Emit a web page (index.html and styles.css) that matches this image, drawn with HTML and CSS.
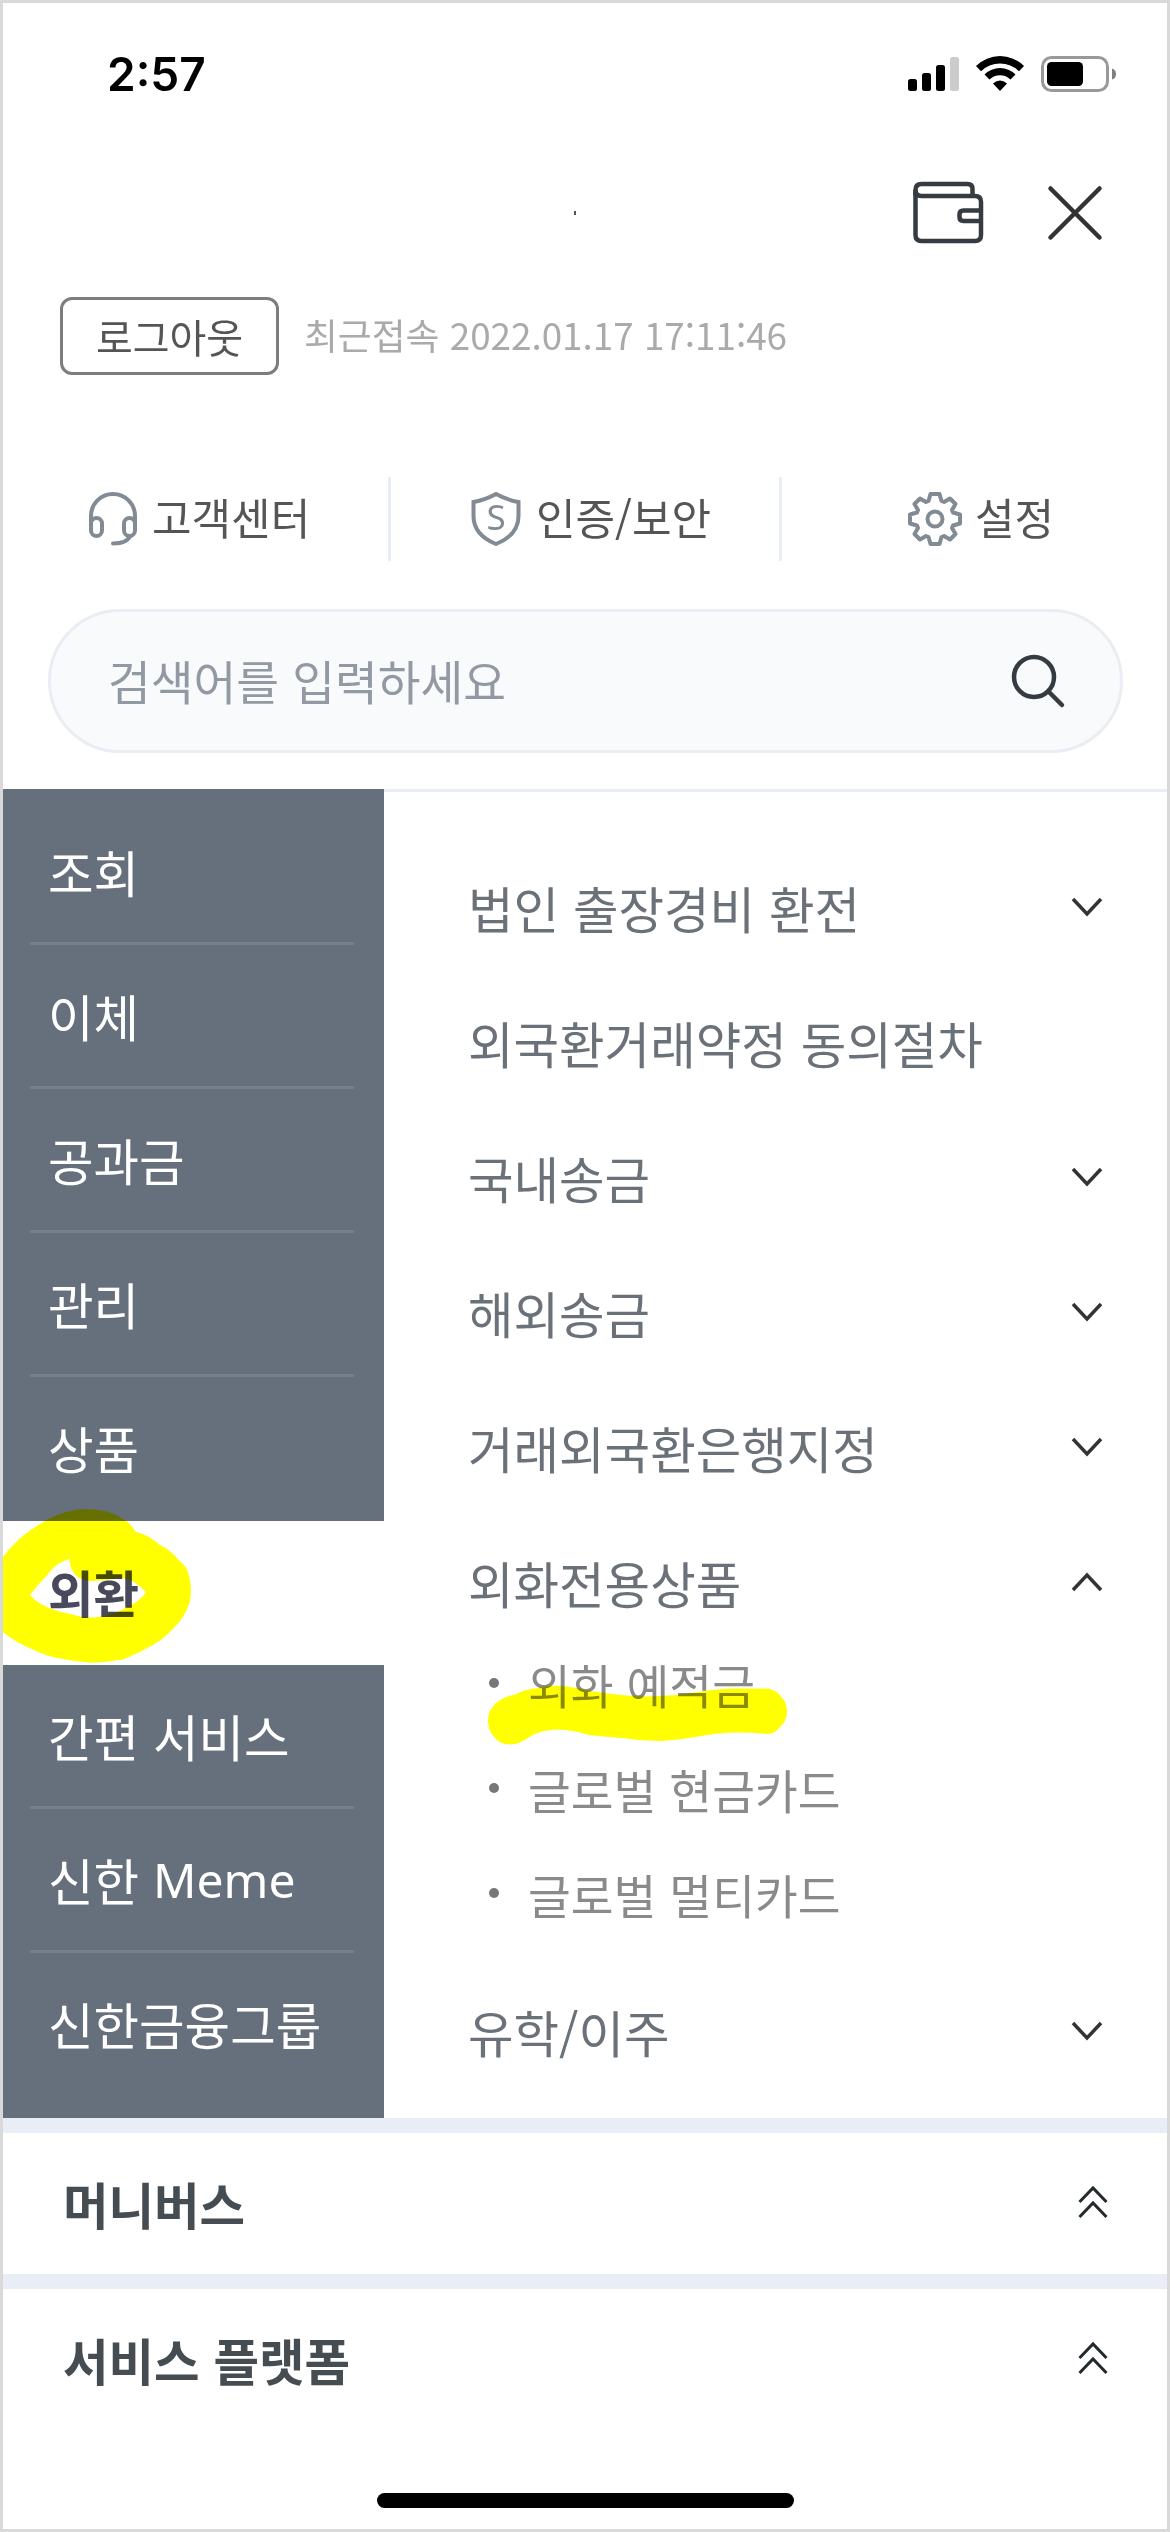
FILE: index.html
```html
<!DOCTYPE html>
<html lang="ko">
<head>
    <meta charset="UTF-8">
    <meta name="viewport" content="width=device-width, initial-scale=1.0">
    <title>전체메뉴</title>
    <link rel="stylesheet" href="styles.css">
</head>
<body>
    <div id="wrapper">
        <!-- 상태바 -->
        <div class="status">
            <span class="time">2:57</span>
            <svg class="status_icons" width="210" height="40" viewBox="0 0 210 40">
                <rect x="1" y="25" width="9" height="12" rx="2.5"/>
                <rect x="15" y="19" width="9" height="18" rx="2.5"/>
                <rect x="29" y="11" width="9" height="26" rx="2.5"/>
                <rect x="43" y="3" width="9" height="34" rx="2.5" fill="#cccccc"/>
                <path d="M69 12 A34 34 0 0 1 117 12 L112 17.300 A27 27 0 0 0 74 17.300 Z"/>
                <path d="M77.500 20.500 A22 22 0 0 1 108.500 20.500 L103.500 25.500 A15 15 0 0 0 82.500 25.500 Z"/>
                <path d="M86 29.500 Q93 23.500 100 29.500 L93 37 Z"/>
                <rect x="135.500" y="3.500" width="65" height="33" rx="9" fill="none" stroke="#999999" stroke-width="3"/>
                <rect x="140" y="8" width="36" height="24" rx="4.500"/>
                <path d="M205 14.500 Q209 15.500 209 20 Q209 24.500 205 25.500 Z" fill="#808080"/>
            </svg>
        </div>

        <!-- 상단 버튼 -->
        <div class="top">
            <span class="dot"></span>
            <svg width="72" height="64" viewBox="0 0 72 64" fill="none" stroke="#353b40" stroke-width="4.500">
                <path d="M2.500 15 V9 Q2.500 3 8.500 3 H54.500 Q59.500 3 59.500 8 V15"/>
                <path d="M2.500 9 V54 Q2.500 60 8.500 60 H62 Q68 60 68 54 V21 Q68 15 62 15 H8.500 Q2.500 15 2.500 9"/>
                <path d="M68 29.500 H50.500 Q46.500 29.500 46.500 33.500 V36 Q46.500 40 50.500 40 H68"/>
            </svg>
            <svg class="close" width="56" height="56" viewBox="0 0 56 56" fill="none" stroke="#333333" stroke-width="4.500" stroke-linecap="round">
                <path d="M3.500 3.500 L52.500 52.500 M52.500 3.500 L3.500 52.500"/>
            </svg>
        </div>

        <div class="login">
            <button class="bt_logout">로그아웃</button>
            <span class="last">최근접속 2022.01.17 17:11:46</span>
        </div>

        <div class="quick">
            <a class="q1">
                <svg width="50" height="56" viewBox="0 0 50 56" fill="none" stroke="#828a94" stroke-width="4" stroke-linecap="round">
                    <path d="M3 38 V25 A22 22 0 0 1 47 25 V38"/>
                    <rect x="3" y="27" width="11" height="18" rx="5.500"/>
                    <rect x="36" y="27" width="11" height="18" rx="5.500"/>
                    <path d="M42 45 Q39 52.500 25 52.500"/>
                </svg>
                <span>고객센터</span>
            </a>
            <a class="q2">
                <svg width="50" height="56" viewBox="0 0 50 56" fill="none" stroke="#828a94" stroke-width="4">
                    <path d="M25 3 Q36 9 47.500 11 V25 Q47.500 44 25 53 Q2.500 44 2.500 25 V11 Q14 9 25 3 Z"/>
                    <text class="shield_s" x="25" y="39" text-anchor="middle" stroke="none" fill="#828a94">S</text>
                </svg>
                <span>인증/보안</span>
            </a>
            <a class="q3">
                <svg width="56" height="56" viewBox="-28 -28 56 56" fill="none" stroke="#828a94" stroke-width="4" stroke-linejoin="round">
                    <path d="M-4.500 -25 H4.500 L6.500 -18 L9 -17 L15 -20.500 L20.500 -15 L17 -9 L18 -6.500 L25 -4.500 V4.500 L18 6.500 L17 9 L20.500 15 L15 20.500 L9 17 L6.500 18 L4.500 25 H-4.500 L-6.500 18 L-9 17 L-15 20.500 L-20.500 15 L-17 9 L-18 6.500 L-25 4.500 V-4.500 L-18 -6.500 L-17 -9 L-20.500 -15 L-15 -20.500 L-9 -17 L-6.500 -18 Z"/>
                    <circle r="7.500"/>
                </svg>
                <span>설정</span>
            </a>
        </div>

        <div class="search">
            <span>검색어를 입력하세요</span>
            <svg width="56" height="56" viewBox="0 0 56 56" fill="none" stroke="#353b40" stroke-width="4.500" stroke-linecap="round">
                <circle cx="24" cy="24" r="20"/>
                <path d="M39 39 L52 52"/>
            </svg>
        </div>

        <div id="content">
            <!-- 좌측 대메뉴 -->
            <ul class="side">
                <li>조회</li>
                <li>이체</li>
                <li>공과금</li>
                <li>관리</li>
                <li class="noline">상품</li>
                <li class="on">외환</li>
                <li>간편 서비스</li>
                <li>신한&nbsp;<span class="eng">Meme</span></li>
                <li class="noline">신한금융그룹</li>
            </ul>
            <!-- 우측 소메뉴 -->
            <div class="menu">
                <div class="row">법인 출장경비 환전<svg class="arrow" viewBox="0 0 32 20"><path d="M2 2 L16 17 L30 2"/></svg></div>
                <div class="row">외국환거래약정 동의절차</div>
                <div class="row">국내송금<svg class="arrow" viewBox="0 0 32 20"><path d="M2 2 L16 17 L30 2"/></svg></div>
                <div class="row">해외송금<svg class="arrow" viewBox="0 0 32 20"><path d="M2 2 L16 17 L30 2"/></svg></div>
                <div class="row">거래외국환은행지정<svg class="arrow" viewBox="0 0 32 20"><path d="M2 2 L16 17 L30 2"/></svg></div>
                <div class="row">외화전용상품<svg class="arrow" viewBox="0 0 32 20"><path d="M2 18 L16 3 L30 18"/></svg></div>
                <ul class="sub">
                    <li>외화 예적금</li>
                    <li>글로벌 현금카드</li>
                    <li>글로벌 멀티카드</li>
                </ul>
                <div class="row">유학/이주<svg class="arrow" viewBox="0 0 32 20"><path d="M2 2 L16 17 L30 2"/></svg></div>
            </div>
        </div>

        <div class="fold">머니버스<svg class="double" viewBox="0 0 30 34"><path d="M1.500 17 L15 3 L28.500 17 M1.500 32 L15 18 L28.500 32"/></svg></div>
        <div class="fold">서비스 플랫폼<svg class="double" viewBox="0 0 30 34"><path d="M1.500 17 L15 3 L28.500 17 M1.500 32 L15 18 L28.500 32"/></svg></div>
        <div class="home"></div>

        <!-- 형광펜 표시 -->
        <svg class="marker" width="1170" height="2532" viewBox="0 0 1170 2532" fill="#ffff00">
            <path fill-rule="evenodd" d="M3 1557 Q18 1537 37 1526 Q57 1512 78 1509.500 Q90 1509 99 1510 Q113 1512 123 1519 Q132 1524 135 1531.500 Q149 1535 160 1545 Q171 1550 179 1560.500 Q188 1566 190 1580.500 Q192 1592 189.500 1603 Q184 1619 173.500 1628 Q165 1638 153 1645 Q139 1653 123 1659.500 Q108 1662 91.500 1662.700 Q77 1662 63.500 1659 Q48 1657 33.600 1649.700 Q16 1643 3 1632 Z
                M30 1595 Q37 1585 46.600 1576 Q52 1568 58 1564 Q63 1561 69.400 1559 Q70 1567 73 1571.600 Q76 1577 80 1578 Q85 1581 91.500 1581 Q105 1581 119 1578 Q127 1578 134 1582 Q141 1586 146 1592.600 Q138 1603 127 1607 Q118 1613 108 1615 Q100 1617.600 91.500 1617.600 Q81 1617.600 71 1614 Q57 1612 45 1606 Q36 1602 30 1595 Z"/>
            <path d="M488 1721 Q488 1711 495 1704 Q503 1697 514.500 1694.700 Q525 1689 538 1688 Q550 1685 563 1686 Q578 1688 594 1691.400 Q610 1694 626 1695.500 Q643 1697 659 1696 Q675 1696 691 1693 Q710 1690 729 1688.600 H766 Q775 1689 780 1695.500 Q787 1702 787 1711 Q787 1721 780 1727 Q775 1734 768 1734 Q748 1732 729 1732.700 Q715 1733 701 1736 Q681 1740 661 1741 Q641 1741 622 1738 Q605 1737 589 1735 Q577 1731 566 1730 Q556 1729 547 1730.600 Q537 1732 528.500 1737.500 Q520 1744 510 1744.500 Q500 1744 495 1738 Q488 1731 488 1721 Z"/>
        </svg>
    </div>
</body>
</html>
```

FILE: styles.css
```css
*{box-sizing: border-box;}
body{
    margin: 0;
    font-family: "Noto Sans CJK KR", sans-serif;
    font-weight: 400;
}
ul{
    margin: 0;
    padding: 0;
    list-style: none;
}
#wrapper{
    position: relative;
    width: 1170px;
    height: 2532px;
    border: 3px solid #d9d9d9;
    background-color: #ffffff;
    overflow: hidden;
}

/* 상태바 */
.status{
    display: flex;
    justify-content: space-between;
    height: 152px;
    padding: 51px 50px 0 104px;
}
.time{
    font-family: Inter, sans-serif;
    font-size: 46px;
    font-weight: 600;
    line-height: 40px;
}

.top{
    display: flex;
    justify-content: flex-end;
    align-items: center;
    height: 116px;
    padding-right: 64px;
}
.dot{
    width: 2px;
    height: 4px;
    margin-right: 337px;
    background-color: #555555;
}
.close{margin-left: 62px;}

.login{
    display: flex;
    align-items: center;
    height: 130px;
    padding-left: 57px;
}
.bt_logout{
    width: 219px;
    height: 78px;
    padding: 0;
    border: 3px solid #7d7d7d;
    border-radius: 12px;
    background-color: #ffffff;
    color: #555555;
    font-family: inherit;
    font-size: 40px;
    line-height: 60px;
}
.last{
    margin-left: 25px;
    padding-bottom: 4px;
    color: #aaaaaa;
    font-size: 36.800px;
}

/* 고객센터, 인증/보안, 설정 */
.quick{
    display: flex;
    height: 84px;
    margin-top: 76px;
    color: #555555;
    font-size: 43px;
}
.quick a{
    display: flex;
    align-items: center;
    border-right: 3px solid #e9edf5;
}
.quick svg{flex: none;}
.quick span{padding-bottom: 7px;}
.quick .q1{width: 388px; padding-left: 85px; gap: 14px;}
.quick .q2{width: 391px; padding-left: 80px; gap: 15px;}
.quick .q3{padding-left: 125px; gap: 12px; border: none;}
.shield_s{
    font-family: "Noto Sans", sans-serif;
    font-size: 35px;
}

.search{
    display: flex;
    justify-content: space-between;
    align-items: center;
    width: 1075px;
    height: 144px;
    margin: 48px 0 36px 45px;
    padding: 0 54px 0 57px;
    border: 3px solid #ebedf5;
    border-radius: 72px;
    background-color: #f9fafc;
    color: #9299a3;
    font-size: 46.500px;
}
.search span{padding-bottom: 3px;}

#content{
    display: flex;
    height: 1329px;
    border-top: 3px solid #e9edf5;
}
.side{
    width: 381px;
    height: 1329px;
    margin-top: -3px;
    padding: 12px 0 21px;
    background-color: #66707c;
    color: #ffffff;
    font-size: 49.500px;
}
.side li{
    display: flex;
    align-items: center;
    position: relative;
    height: 144px;
    padding: 0 0 3px 45px;
}
.side li::after{
    content: "";
    position: absolute;
    left: 27px;
    bottom: 0;
    width: 324px;
    height: 3px;
    background-color: #75808d;
}
.side .noline::after, .side .on::after{display: none;}
.side .on{
    background-color: #ffffff;
    color: #484a5c;
    font-weight: 700;
}
.eng{
    font-family: "Noto Sans", sans-serif;
    font-size: 48px;
}

.menu{
    flex: 1;
    padding: 50px 64px 0 84px;
    color: #6b7178;
    font-size: 49.500px;
}
.row{
    display: flex;
    justify-content: space-between;
    align-items: center;
    height: 135px;
    padding-bottom: 4px;
}
.arrow{
    width: 32px;
    height: 20px;
    margin-bottom: 2px;
    fill: none;
    stroke: #333333;
    stroke-width: 3.500;
}
.sub{
    margin: -19px 0 18px;
    color: #8a8a8a;
    font-size: 46.500px;
}
.sub li{
    display: flex;
    align-items: center;
    height: 105px;
    padding: 0 0 5px 21px;
}
.sub li::before{
    content: "";
    width: 10px;
    height: 10px;
    margin-right: 29px;
    border-radius: 50%;
    background-color: #777777;
}

/* 하단 접힌 메뉴 */
.fold{
    display: flex;
    justify-content: space-between;
    align-items: center;
    height: 156px;
    padding: 15px 59px 0 60px;
    background: linear-gradient(#e9edf5 15px, #ffffff 15px);
    color: #454c52;
    font-size: 49.500px;
    font-weight: 700;
}
.double{
    width: 30px;
    height: 34px;
    margin-bottom: 4px;
    fill: none;
    stroke: #222a2e;
    stroke-width: 3;
}
.home{
    width: 417px;
    height: 15px;
    margin: 63px auto 0;
    border-radius: 8px;
    background-color: #000000;
}

.marker{
    position: absolute;
    left: -3px;
    top: -3px;
    mix-blend-mode: multiply;
    pointer-events: none;
}
```
